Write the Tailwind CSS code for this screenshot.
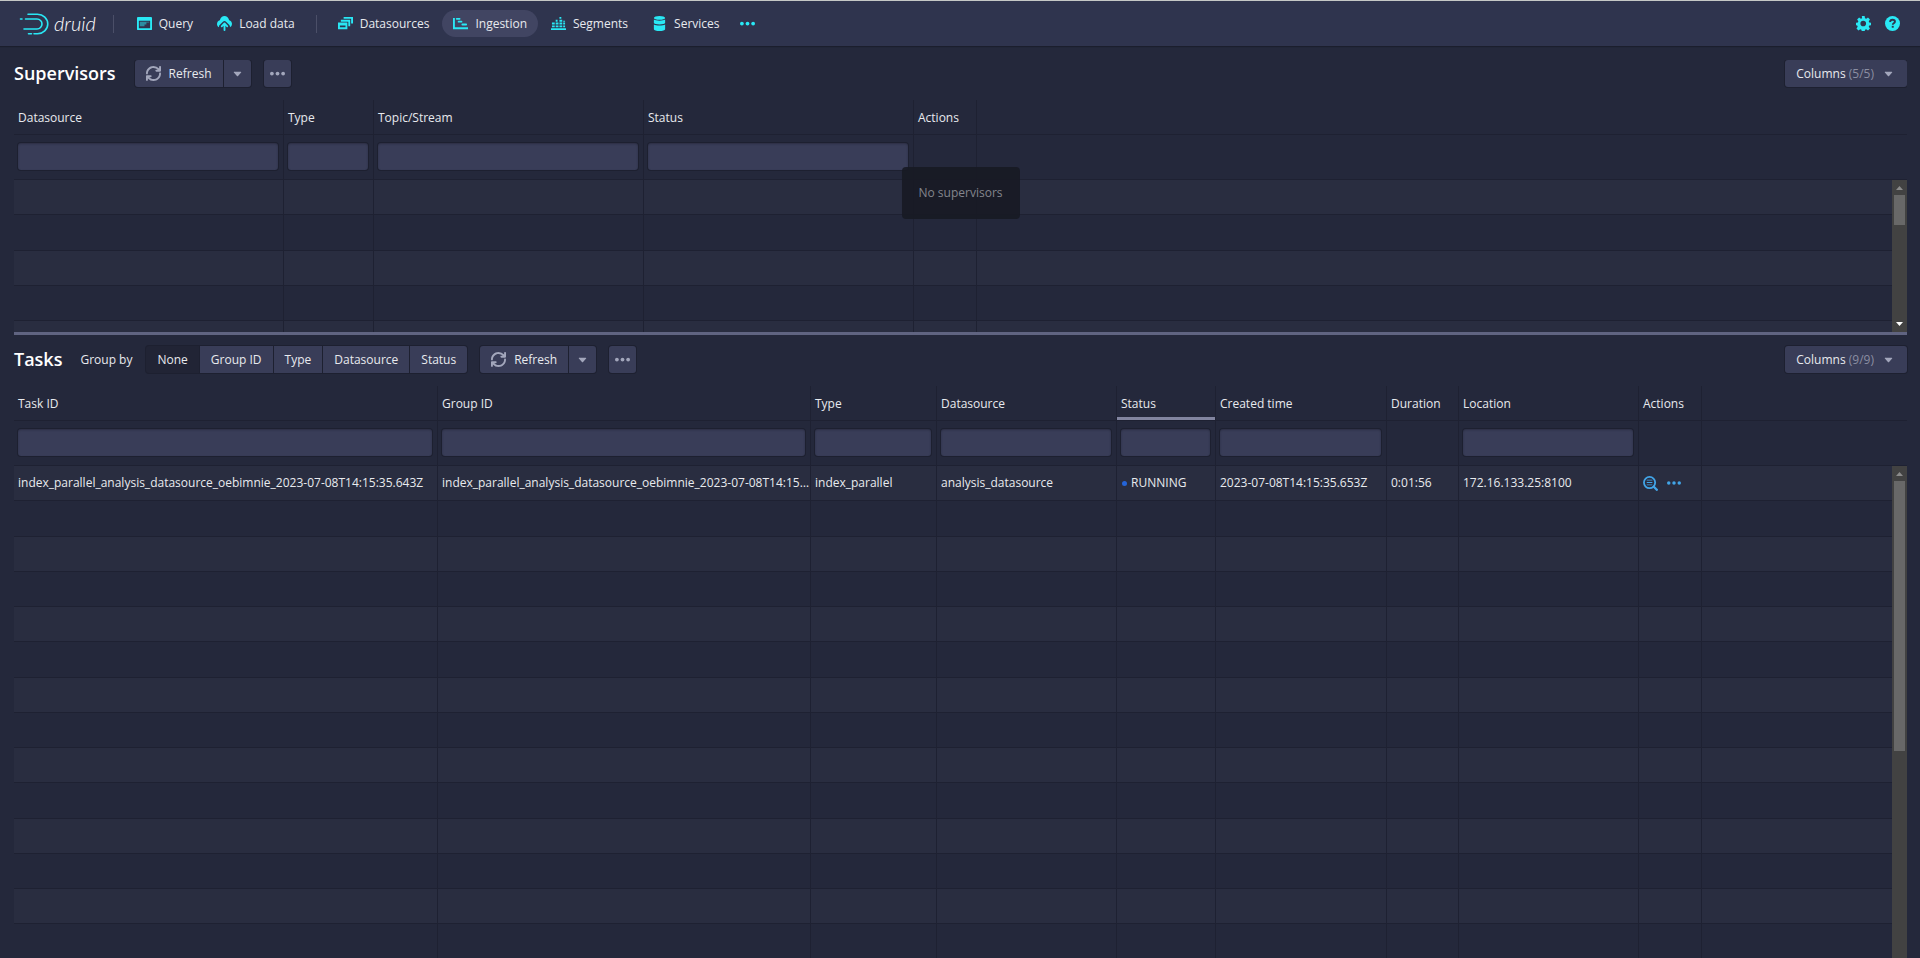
<!DOCTYPE html>
<html lang="en">
<head>
    <meta charset="UTF-8">
    <meta name="viewport" content="width=device-width, initial-scale=1.0">
    <title>Apache Druid - Ingestion</title>
    <script src="https://cdn.jsdelivr.net/npm/@tailwindcss/browser@4"></script>
</head>
<body class="bg-[#24283b] text-[#e8eaee] font-['Open_Sans',sans-serif] text-[12px] leading-4 h-screen overflow-hidden flex flex-col">
    <!-- Icon sprite -->
    <svg class="hidden">
        <symbol id="i-refresh" viewBox="0 0 16 16"><path d="M14.99 6.99c-.55 0-1 .45-1 1 0 3.31-2.69 6-6 6-1.77 0-3.36-.78-4.46-2H5c.55 0 1-.45 1-1s-.45-1-1-1H1c-.55 0-1 .45-1 1v4c0 .55.45 1 1 1s1-.45 1-1v-1.74a7.95 7.95 0 006 2.74c4.42 0 8-3.58 8-8 0-.55-.45-1-1.01-1zM15 0c-.55 0-1 .45-1 1v1.74A7.95 7.95 0 008 0C3.58 0 0 3.58 0 8c0 .55.45 1 1 1s1-.45 1-1c0-3.31 2.69-6 6-6 1.77 0 3.36.78 4.46 2H11c-.55 0-1 .45-1 1s.45 1 1 1h4c.55 0 1-.45 1-1V1c0-.55-.45-1-1-1z"/></symbol>
        <symbol id="i-caret" viewBox="0 0 16 16"><path d="M12 6.5c0-.28-.22-.5-.5-.5h-7a.495.495 0 00-.37.83l3.5 4c.09.1.22.17.37.17s.28-.07.37-.17l3.5-4c.08-.09.13-.2.13-.33z"/></symbol>
        <symbol id="i-more" viewBox="0 0 16 16"><circle cx="2" cy="8" r="2"/><circle cx="8" cy="8" r="2"/><circle cx="14" cy="8" r="2"/></symbol>
        <symbol id="i-query" viewBox="0 0 16 16"><path fill-rule="evenodd" d="M1 1h14q1 0 1 1v12q0 1-1 1H1q-1 0-1-1V2q0-1 1-1zM2 5v8h12V5z"/><path opacity=".5" d="M3 6h10v1H10v2H8v2H3z"/></symbol>
        <symbol id="i-upload" viewBox="0 0 16 16"><path d="M8.7 7.3a1 1 0 0 0-1.4 0l-3 3a1 1 0 0 0 1.4 1.4L7 10.4V15a1 1 0 0 0 2 0v-4.6l1.3 1.3a1 1 0 0 0 1.4-1.4z"/><path d="M13 4.500C12 1.500 10.300 0 8 0S4 1.500 3 4.500C1.300 5 0 6.500 0 8.400c0 1.600.8 2.900 2.200 3.500a2.600 2.600 0 0 1 .9-2.600l3-3a2.700 2.700 0 0 1 3.800 0l3 3c.8.8 1.100 1.700.9 2.600A3.800 3.800 0 0 0 16 8.400c0-1.900-1.300-3.400-3-3.900z"/></symbol>
        <symbol id="i-datasources" viewBox="0 0 16 16"><path fill-rule="evenodd" d="M0 7h10v7H0zM2 10v2h6v-2z"/><path d="M3 4h10v7h-2V6H3zM6 1h10v7h-2V3H6z"/></symbol>
        <symbol id="i-gantt" viewBox="0 0 16 16"><path d="M0 2h2v10h14v2H0z"/><rect x="3" y="2" width="5" height="2" rx="1"/><rect x="5" y="5" width="5" height="2" rx="1"/><rect x="9" y="8" width="6" height="2" rx="1"/></symbol>
        <symbol id="i-segments" viewBox="0 0 16 16"><path d="M0 13h16v2H0zM1 10h3v2H1zM5 10h3v2H5zM9 10h3v2H9zM13 10h2v2h-2zM1 7h3v2H1zM5 7h3v2H5zM9 7h3v2H9zM13 7h2v2h-2zM5 4h2v2H5zM9 4h3v2H9zM9 1h2v2H9zM13 5h2v1h-2z"/></symbol>
        <symbol id="i-database" viewBox="0 0 16 16"><path d="M8 0c3.300 0 6 .9 6 2s-2.700 2-6 2-6-.9-6-2 2.700-2 6-2zM2 3.800C3.200 4.600 5.400 5 8 5s4.800-.4 6-1.200V7.500C14 8.300 11.300 9 8 9s-6-.7-6-1.500zM2 9c1.200.7 3.400 1 6 1s4.800-.3 6-1v5c0 1.100-2.700 2-6 2s-6-.9-6-2z"/></symbol>
        <symbol id="i-cog" viewBox="0 0 16 16"><path fill-rule="evenodd" d="M6.500 0h3l.4 2.300 1.300.5 1.900-1.300 2.100 2.100-1.300 1.900.5 1.300 2.300.4v2.500l-2.300.4-.5 1.300 1.300 1.900-2.100 2.100-1.900-1.300-1.300.5-.4 2.300h-3l-.4-2.300-1.300-.5-1.900 1.300-2.100-2.100 1.300-1.900-.5-1.300L0 9.700V7.200l2.300-.4.500-1.300L1.500 3.600l2.100-2.100 1.900 1.300 1.300-.5zM8 5a3 3 0 1 0 0 6 3 3 0 0 0 0-6z" transform="translate(-.3)"/></symbol>
        <symbol id="i-help" viewBox="0 0 16 16"><circle cx="8" cy="8" r="8"/><path d="M5.500 6.300C5.500 4.500 6.600 4 8 4s2.600.6 2.600 2c0 1.700-2.300 1.700-2.300 3.200" fill="none" stroke="#2f344e" stroke-width="2"/><path fill="#2f344e" d="M7.200 10.500h2.100v2H7.200z"/></symbol>
        <symbol id="i-inspect" viewBox="0 0 16 16"><circle cx="7" cy="7" r="6" fill="none" stroke="currentColor" stroke-width="1.900"/><path d="M11.500 11.500l3.200 3.200" stroke="currentColor" stroke-width="2.500" stroke-linecap="round"/><path d="M4 4h6v.9H4zM4 6.500h6v.9H4zM4 9h6v.9H4z"/></symbol>
    </svg>

    <header class="flex items-center shrink-0 h-[46px] pl-[19px] pr-[13px] bg-[#2f344e] border-t border-[#c5c8c6] shadow-[0_1px_1px_#1b1e2d] whitespace-nowrap">
        <a href="#" class="flex items-center gap-[5px]">
            <svg class="w-[30px] h-[22px]" viewBox="0 0 30 22" fill="none" stroke="#29e8f5" stroke-width="1.600" stroke-linecap="round"><path d="M9 1.200h9.500a10 9.500 0 0 1 0 19.500h-3.500M12.500 20.700h-3M1.500 6h1.500M6.500 6h11.500a5 5 0 0 1 0 10H5"/></svg>
            <span class="font-[Lato] italic font-light text-[20px] leading-5 text-white pb-[2px]">druid</span>
        </a>
        <div class="w-px h-[18px] bg-[#4b4f68] ml-[17px] mr-3"></div>
        <nav class="flex items-center gap-[2px] [&_a]:flex [&_a]:items-center [&_a]:gap-[7px] [&_a]:h-[27px] [&_a]:px-[11px] [&_a]:rounded-full [&_svg]:size-[15px] [&_svg]:fill-[#29e8f5]">
            <a href="#"><svg><use href="#i-query"/></svg>Query</a>
            <a href="#"><svg><use href="#i-upload"/></svg>Load data</a>
            <div class="w-px h-[18px] bg-[#4b4f68] mx-2"></div>
            <a href="#"><svg><use href="#i-datasources"/></svg>Datasources</a>
            <a href="#" class="bg-[#414562]"><svg><use href="#i-gantt"/></svg>Ingestion</a>
            <a href="#"><svg><use href="#i-segments"/></svg>Segments</a>
            <a href="#"><svg><use href="#i-database"/></svg>Services</a>
            <button type="button" aria-label="More" class="px-[7px]"><svg><use href="#i-more"/></svg></button>
        </nav>
        <div class="flex ml-auto [&_svg]:size-[15px] [&_svg]:fill-[#29e8f5]">
            <button type="button" aria-label="Settings" class="px-[7px]"><svg><use href="#i-cog"/></svg></button>
            <button type="button" aria-label="Help" class="px-[7px]"><svg><use href="#i-help"/></svg></button>
        </div>
    </header>

    <main class="flex flex-col grow min-h-0 pl-[14px] pr-[13px] pt-[14px] [&_button]:flex [&_button]:items-center [&_button]:h-[27px] [&_button]:bg-[#393d58] [&_button]:shadow-[0_0_0_1px_#1d2030] [&_button_svg]:fill-[#a3a7bc] [&_h1]:text-[18px] [&_h1]:leading-6 [&_h1]:pb-[2px] [&_h1]:font-semibold [&_h1]:text-white [&_th]:text-left [&_th]:font-normal [&_th]:px-1 [&_th]:pt-[2px] [&_td]:pl-1 [&_td]:pr-[5px] [&_thead_td]:pb-[2px] [&_th]:border-r [&_td]:border-r [&_tr>:last-child]:border-r-0 [&_th]:border-b [&_td]:border-b [&_th]:border-[#1e2132] [&_td]:border-[#1e2132] [&_input]:block [&_input]:w-full [&_input]:h-[27px] [&_input]:rounded-[3px] [&_input]:bg-[#393d58] [&_input]:shadow-[0_0_0_1px_#1d2030,inset_0_1px_2px_#1d203080]">
        <section class="relative flex flex-col h-[272px] shrink-0 overflow-hidden">
            <div class="flex items-center shrink-0 h-[27px] mb-[13px]">
                <h1>Supervisors</h1>
                <div class="flex gap-px ml-[19px]">
                    <button type="button" class="gap-2 px-[11px] rounded-l-[3px]"><svg class="size-[15px]"><use href="#i-refresh"/></svg>Refresh</button>
                    <button type="button" aria-label="Refresh options" class="px-[6px] rounded-r-[3px]"><svg class="size-[15px]"><use href="#i-caret"/></svg></button>
                </div>
                <button type="button" aria-label="More" class="px-[6px] ml-[13px] rounded-[3px]"><svg class="size-[15px]"><use href="#i-more"/></svg></button>
                <button type="button" class="gap-[7px] px-[11px] ml-auto rounded-[3px]"><span>Columns <span class="text-[#8b8ea2]">(5/5)</span></span><svg class="size-[15px]"><use href="#i-caret"/></svg></button>
            </div>
            <div class="relative grow min-h-0">
                <table class="table-fixed w-full border-separate border-spacing-0">
                    <colgroup><col class="w-[270px]"><col class="w-[90px]"><col class="w-[270px]"><col class="w-[270px]"><col class="w-[63px]"><col></colgroup>
                    <thead>
                        <tr class="h-[35px]"><th>Datasource</th><th>Type</th><th>Topic/Stream</th><th>Status</th><th>Actions</th><th></th></tr>
                        <tr class="h-[45px]">
                            <td><input type="text" aria-label="Filter datasource"></td>
                            <td><input type="text" aria-label="Filter type"></td>
                            <td><input type="text" aria-label="Filter topic"></td>
                            <td><input type="text" aria-label="Filter status"></td>
                            <td></td><td></td>
                        </tr>
                    </thead>
                    <tbody class="[&>tr]:h-[35px] [&>tr:nth-child(4n+2)]:h-9 [&>tr:nth-child(odd)]:bg-[#292d40]">
                        <tr><td></td><td></td><td></td><td></td><td></td><td></td></tr>
                        <tr><td></td><td></td><td></td><td></td><td></td><td></td></tr>
                        <tr><td></td><td></td><td></td><td></td><td></td><td></td></tr>
                        <tr><td></td><td></td><td></td><td></td><td></td><td></td></tr>
                        <tr><td></td><td></td><td></td><td></td><td></td><td></td></tr>
                    </tbody>
                </table>
                <div class="absolute right-0 top-20 bottom-0 w-[15px] bg-[#424242] flex flex-col items-center">
                    <svg class="size-[15px] shrink-0 fill-[#8b8b8b]" viewBox="0 0 15 15"><path d="M4 10h7L7.500 6z"/></svg>
                    <div class="w-[11px] h-[30px] bg-[#686868]"></div>
                    <svg class="size-[15px] shrink-0 mt-auto fill-white" viewBox="0 0 15 15"><path d="M4 5h7L7.500 9z"/></svg>
                </div>
                <div class="absolute left-1/2 top-[67px] -translate-x-1/2 px-[17px] py-[18px] rounded-[4px] bg-[#171923]/90 text-[#83858d]">No supervisors</div>
            </div>
        </section>

        <div class="h-[3px] shrink-0 bg-[#606481]"></div>

        <section class="flex flex-col grow min-h-0 pt-[11px]">
            <div class="flex items-center shrink-0 h-[27px] mb-[13px]">
                <h1>Tasks</h1>
                <span class="ml-[18px]">Group by</span>
                <div class="flex gap-px ml-[14px] [&_button]:px-[11px]">
                    <button type="button" class="rounded-l-[3px] bg-[#212435]!">None</button>
                    <button type="button">Group ID</button>
                    <button type="button">Type</button>
                    <button type="button">Datasource</button>
                    <button type="button" class="rounded-r-[3px]">Status</button>
                </div>
                <div class="flex gap-px ml-[13px]">
                    <button type="button" class="gap-2 px-[11px] rounded-l-[3px]"><svg class="size-[15px]"><use href="#i-refresh"/></svg>Refresh</button>
                    <button type="button" aria-label="Refresh options" class="px-[6px] rounded-r-[3px]"><svg class="size-[15px]"><use href="#i-caret"/></svg></button>
                </div>
                <button type="button" aria-label="More" class="px-[6px] ml-[13px] rounded-[3px]"><svg class="size-[15px]"><use href="#i-more"/></svg></button>
                <button type="button" class="gap-[7px] px-[11px] ml-auto rounded-[3px]"><span>Columns <span class="text-[#8b8ea2]">(9/9)</span></span><svg class="size-[15px]"><use href="#i-caret"/></svg></button>
            </div>
            <div class="relative grow min-h-0 overflow-hidden">
                <table class="table-fixed w-full border-separate border-spacing-0">
                    <colgroup><col class="w-[424px]"><col class="w-[373px]"><col class="w-[126px]"><col class="w-[180px]"><col class="w-[99px]"><col class="w-[171px]"><col class="w-[72px]"><col class="w-[180px]"><col class="w-[63px]"><col></colgroup>
                    <thead>
                        <tr class="h-[35px]"><th>Task ID</th><th>Group ID</th><th>Type</th><th>Datasource</th><th class="shadow-[inset_0_-3px_0_#8285a0]">Status</th><th>Created time</th><th>Duration</th><th>Location</th><th>Actions</th><th></th></tr>
                        <tr class="h-[45px]">
                            <td><input type="text" aria-label="Filter task ID"></td>
                            <td><input type="text" aria-label="Filter group ID"></td>
                            <td><input type="text" aria-label="Filter type"></td>
                            <td><input type="text" aria-label="Filter datasource"></td>
                            <td><input type="text" aria-label="Filter status"></td>
                            <td><input type="text" aria-label="Filter created time"></td>
                            <td></td>
                            <td><input type="text" aria-label="Filter location"></td>
                            <td></td><td></td>
                        </tr>
                    </thead>
                    <tbody id="taskRows" class="[&>tr]:h-[35px] [&>tr:nth-child(4n+2)]:h-9 [&>tr:nth-child(odd)]:bg-[#292d40]">
                        <tr>
                            <td class="truncate">index_parallel_analysis_datasource_oebimnie_2023-07-08T14:15:35.643Z</td>
                            <td class="truncate pr-0!">index_parallel_analysis_datasource_oebimnie_2023-07-08T14:15:35.643Z</td>
                            <td>index_parallel</td>
                            <td>analysis_datasource</td>
                            <td><span class="inline-block size-[5px] mx-px mb-px rounded-full bg-[#2464d8]"></span> RUNNING</td>
                            <td>2023-07-08T14:15:35.653Z</td>
                            <td>0:01:56</td>
                            <td>172.16.133.25:8100</td>
                            <td><div class="flex items-center gap-[9px] text-[#42a5e8] [&_svg]:fill-[#42a5e8]"><a href="#" aria-label="Details"><svg class="size-[15px]"><use href="#i-inspect"/></svg></a><a href="#" aria-label="More"><svg class="size-[14px]"><use href="#i-more"/></svg></a></div></td>
                            <td></td>
                        </tr>
                    </tbody>
                </table>
                <div class="absolute right-0 top-20 bottom-0 w-[15px] bg-[#424242] flex flex-col items-center">
                    <svg class="size-[15px] shrink-0 fill-[#8b8b8b]" viewBox="0 0 15 15"><path d="M4 10h7L7.500 6z"/></svg>
                    <div class="w-[11px] h-[270px] bg-[#686868]"></div>
                </div>
            </div>
        </section>
    </main>

    <script>
        // Pad the task table with empty rows
        const taskRows = document.getElementById('taskRows');
        for (let i = 0; i < 24; i++) {
            const row = taskRows.insertRow();
            for (let j = 0; j < 10; j++) row.insertCell();
        }
    </script>
</body>
</html>
